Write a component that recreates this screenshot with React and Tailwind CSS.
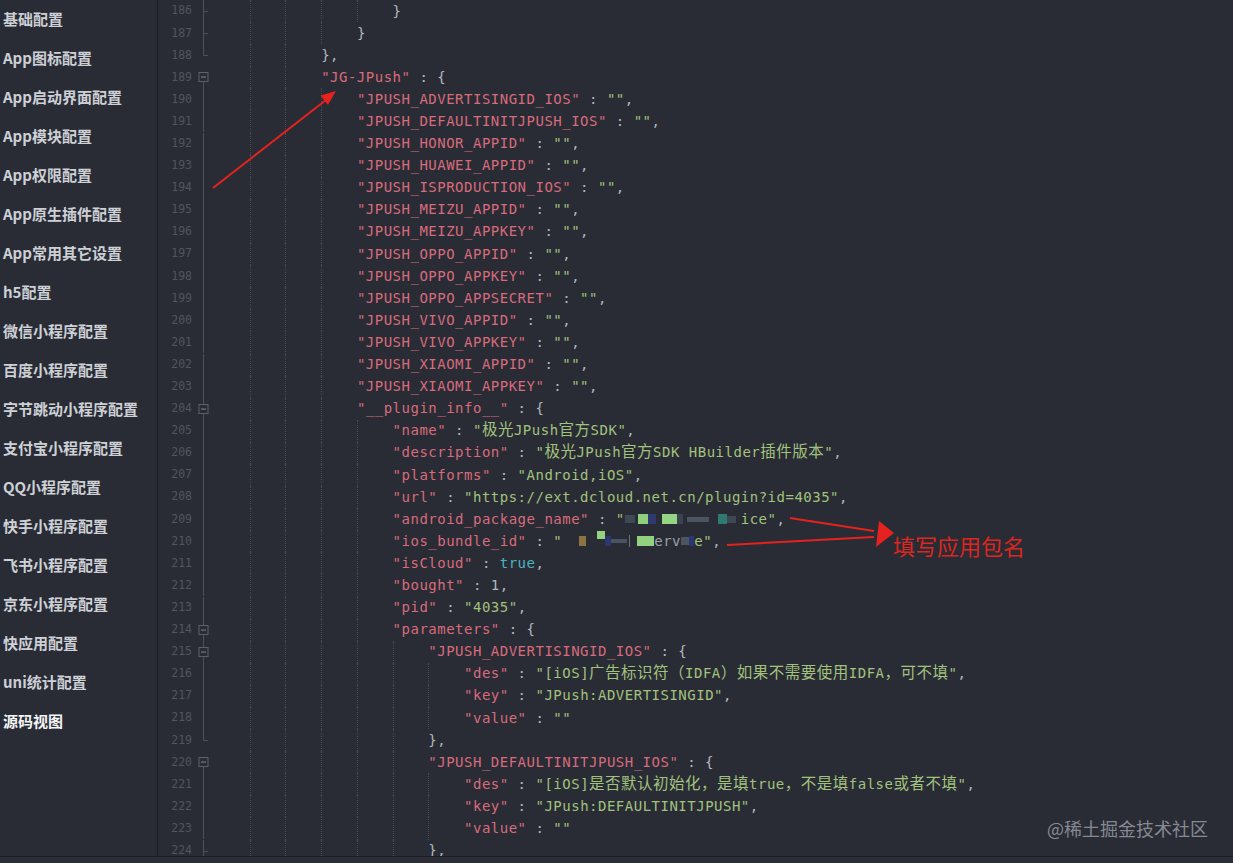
import React from 'react';

// HBuilderX manifest source view — dark theme, JG-JPush plugin block

const MONO = { fontFamily: '"DejaVu Sans Mono", "Noto Sans CJK SC", monospace' };
const SANS = { fontFamily: '"Noto Sans CJK SC", "Noto Sans", sans-serif' };

const K = 'text-[#d86b7b]';
const S = 'text-[#a2c27d]';
const P = 'text-[#b3b7bf]';
const B = 'text-[#4eb3bf]';

const MENU = [
  '基础配置', 'App图标配置', 'App启动界面配置', 'App模块配置', 'App权限配置',
  'App原生插件配置', 'App常用其它设置', 'h5配置', '微信小程序配置', '百度小程序配置',
  '字节跳动小程序配置', '支付宝小程序配置', 'QQ小程序配置', '快手小程序配置',
  '飞书小程序配置', '京东小程序配置', '快应用配置', 'uni统计配置', '源码视图',
];

const kv = (key, val, type = S, trail = ',') => [[K, `"${key}"`], [P, ' : '], [type, val], [P, trail]];
const obj = (key) => [[K, `"${key}"`], [P, ' : {']];

// mosaic blocks: [width, colour, height, self]
const Mosaic = ({ parts, width }) => (
  <span className="inline-flex items-center h-full" style={{ width }}>
    {parts.map(([w, c, h, self], i) =>
      typeof c === 'string' && c.startsWith('txt:') ? (
        <span key={i} className="text-[#9aa0a8] shrink-0" style={{ width: w }}>{c.slice(4)}</span>
      ) : (
        <span
          key={i}
          className={`shrink-0 ${self === 'top' ? 'self-start mt-[1px]' : ''}`}
          style={{ width: w, height: h || 10, background: c || 'transparent' }}
        />
      )
    )}
  </span>
);

const mosaicA = [
  [10, '#3e4a53', 8], [3], [10, '#8fd07c'], [8, '#2e3a6e'], [6], [15, '#95d483'], [6, '#38444e'],
  [4], [22, '#4b5560', 5], [9], [9, '#2f7a70'], [9, '#3e4852', 7], [5],
];
const mosaicB = [
  [17], [7, '#8a7440'], [11], [8, '#94d27f', 8, 'top'], [6, '#2c3670'], [16, '#4a5360', 4], [2],
  [1, '#6a707a', 12], [7], [17, '#92d27e'], [27, 'txt:erv'], [8, '#4b5562', 8], [5, '#2c3670'],
];

const ROWS = [
  [186, 5, [[P, '}']]],
  [187, 4, [[P, '}']]],
  [188, 3, [[P, '},']]],
  [189, 3, obj('JG-JPush')],
  [190, 4, kv('JPUSH_ADVERTISINGID_IOS', '""')],
  [191, 4, kv('JPUSH_DEFAULTINITJPUSH_IOS', '""')],
  [192, 4, kv('JPUSH_HONOR_APPID', '""')],
  [193, 4, kv('JPUSH_HUAWEI_APPID', '""')],
  [194, 4, kv('JPUSH_ISPRODUCTION_IOS', '""')],
  [195, 4, kv('JPUSH_MEIZU_APPID', '""')],
  [196, 4, kv('JPUSH_MEIZU_APPKEY', '""')],
  [197, 4, kv('JPUSH_OPPO_APPID', '""')],
  [198, 4, kv('JPUSH_OPPO_APPKEY', '""')],
  [199, 4, kv('JPUSH_OPPO_APPSECRET', '""')],
  [200, 4, kv('JPUSH_VIVO_APPID', '""')],
  [201, 4, kv('JPUSH_VIVO_APPKEY', '""')],
  [202, 4, kv('JPUSH_XIAOMI_APPID', '""')],
  [203, 4, kv('JPUSH_XIAOMI_APPKEY', '""')],
  [204, 4, obj('__plugin_info__')],
  [205, 5, kv('name', '"极光JPush官方SDK"')],
  [206, 5, kv('description', '"极光JPush官方SDK HBuilder插件版本"')],
  [207, 5, kv('platforms', '"Android,iOS"')],
  [208, 5, kv('url', '"https://ext.dcloud.net.cn/plugin?id=4035"')],
  [209, 5, [[K, '"android_package_name"'], [P, ' : '], [S, '"'], ['node', <Mosaic key="m" parts={mosaicA} width={116} />], [S, 'ice"'], [P, ',']]],
  [210, 5, [[K, '"ios_bundle_id"'], [P, ' : '], [S, '"'], ['node', <Mosaic key="m" parts={mosaicB} width={132} />], [S, 'e"'], [P, ',']]],
  [211, 5, kv('isCloud', 'true', B)],
  [212, 5, kv('bought', '1', P)],
  [213, 5, kv('pid', '"4035"')],
  [214, 5, obj('parameters')],
  [215, 6, obj('JPUSH_ADVERTISINGID_IOS')],
  [216, 7, kv('des', '"[iOS]广告标识符（IDFA）如果不需要使用IDFA，可不填"')],
  [217, 7, kv('key', '"JPush:ADVERTISINGID"')],
  [218, 7, kv('value', '""', S, '')],
  [219, 6, [[P, '},']]],
  [220, 6, obj('JPUSH_DEFAULTINITJPUSH_IOS')],
  [221, 7, kv('des', '"[iOS]是否默认初始化，是填true，不是填false或者不填"')],
  [222, 7, kv('key', '"JPush:DEFAULTINITJPUSH"')],
  [223, 7, kv('value', '""', S, '')],
  [224, 6, [[P, '},']]],
];

const FOLD = { 186: 'tick', 187: 'tick', 188: 'end', 189: 'box', 204: 'boxn', 214: 'boxn', 215: 'boxn', 219: 'end', 220: 'box', 224: 'tick' };

const CJK_RE = /([\u3000-\u303f\u4e00-\u9fff\uff00-\uffef]+)/;
const withCjk = (text) =>
  text.split(CJK_RE).map((part, i) =>
    i % 2 === 1 ? <span key={i} className="text-[15.5px]">{part}</span> : part
  );

const FoldMark = ({ type }) => {
  const c = '#4d515c';
  return (
    <svg className="w-[22px] h-full shrink-0" viewBox="0 0 22 22" preserveAspectRatio="none">
      {(type === 'line' || type === 'tick') && <line x1="11.5" y1="0" x2="11.5" y2="22" stroke={c} strokeWidth="1" />}
      {type === 'end' && <line x1="11.5" y1="0" x2="11.5" y2="11.5" stroke={c} strokeWidth="1" />}
      {(type === 'tick' || type === 'end') && <line x1="11.5" y1="11.5" x2="16" y2="11.5" stroke={c} strokeWidth="1" />}
      {type === 'box' && <line x1="11.5" y1="11" x2="11.5" y2="22" stroke={c} strokeWidth="1" />}
      {type === 'boxn' && <line x1="11.5" y1="0" x2="11.5" y2="22" stroke={c} strokeWidth="1" />}
      {(type === 'box' || type === 'boxn') && (
        <g>
          <rect x="7" y="6.5" width="9" height="9" fill="#292c35" stroke="#5d616b" strokeWidth="1" />
          <line x1="9" y1="11" x2="14" y2="11" stroke="#80848d" strokeWidth="1" />
        </g>
      )}
    </svg>
  );
};

const CodeRow = ({ n, lv, tokens }) => (
  <div className="flex h-[22.1px] items-stretch">
    <div className="w-[34px] shrink-0 text-right text-[11.5px] text-[#50555f] flex items-center justify-end" style={MONO}>{n}</div>
    <FoldMark type={FOLD[n] || 'line'} />
    <div className="flex items-stretch whitespace-pre text-[14px] tracking-[0.5px]" style={MONO}>
      {Array.from({ length: lv }).map((_, i) => (
        <span key={i} className={`w-[35.72px] shrink-0 ${i > 0 ? 'border-l border-dotted border-[#474b55]' : ''}`} />
      ))}
      <span className="flex items-center">
        {tokens.map(([cls, val], i) =>
          cls === 'node' ? val : <span key={i} className={cls}>{withCjk(val)}</span>
        )}
      </span>
    </div>
  </div>
);

export default function App() {
  return (
    <div className="relative w-[1233px] h-[863px] overflow-hidden bg-[#292c35] flex flex-col">
      <div className="flex h-[857px] border-b border-[#1c1e24]">
        <aside className="w-[158px] shrink-0 border-r border-[#1c1e24] flex flex-col" style={SANS}>
          {MENU.map((m, i) => (
            <div
              key={m}
              className={`h-[39px] shrink-0 flex items-center pl-[3px] text-[15px] font-bold ${i === MENU.length - 1 ? 'text-[#f4f5f7]' : 'text-[#cdd0d5]'}`}
            >
              {m}
            </div>
          ))}
        </aside>
        <main className="flex-1 min-w-0 overflow-hidden">
          {ROWS.map(([n, lv, tokens]) => (
            <CodeRow key={n} n={n} lv={lv} tokens={tokens} />
          ))}
        </main>
      </div>
      <div className="flex-1 bg-[#2b2e37]" />

      {/* annotation overlay */}
      <svg className="absolute inset-0 pointer-events-none" width="1233" height="863">
        <line x1="213" y1="188" x2="326" y2="100" stroke="#e5221d" strokeWidth="2" />
        <polygon points="336,91 320.5,95.6 327.9,105" fill="#e5221d" />
        <line x1="790" y1="518" x2="874" y2="531" stroke="#e5221d" strokeWidth="2" />
        <line x1="727" y1="545" x2="874" y2="537" stroke="#e5221d" strokeWidth="2" />
        <polygon points="894,533 879,521 876,547" fill="#e5221d" />
      </svg>
      <div className="absolute left-[893px] top-[531px] text-[22px] leading-[28px] text-[#dd2620]" style={SANS}>填写应用包名</div>
      <div className="absolute left-[1047px] top-[816px] text-[18px] leading-[24px] text-[#868992]" style={SANS}>@稀土掘金技术社区</div>
    </div>
  );
}
